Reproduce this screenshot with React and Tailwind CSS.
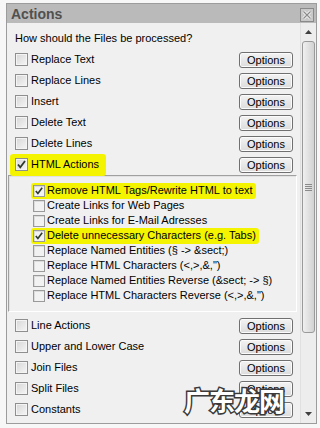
import React from "react";

const top = ["Replace Text", "Replace Lines", "Insert", "Delete Text", "Delete Lines"];
const subs = [
  { label: "Remove HTML Tags/Rewrite HTML to text", on: true },
  { label: "Create Links for Web Pages" },
  { label: "Create Links for E-Mail Adresses" },
  { label: "Delete unnecessary Characters (e.g. Tabs)", on: true },
  { label: "Replace Named Entities (§ -> &sect;)" },
  { label: 'Replace HTML Characters (<,>,&,")' },
  { label: "Replace Named Entities Reverse (&sect; -> §)" },
  { label: 'Replace HTML Characters Reverse (<,>,&,")' },
];
const bottom = ["Line Actions", "Upper and Lower Case", "Join Files", "Split Files", "Constants", ""];

function Tick({ size = 11 }) {
  return (
    <svg width={size} height={size} viewBox="0 0 11 11" className="absolute inset-0 m-auto">
      <path d="M2 5.5 L4.3 8.3 L9 2" fill="none" stroke="#2e3a2a" strokeWidth="1.8" />
    </svg>
  );
}

function Box({ on }) {
  return (
    <span className="relative w-[13px] h-[13px] shrink-0 border border-[#8f8f8f] bg-gradient-to-br from-[#d6d6d6] to-[#f6f6f6] shadow-[inset_0_0_0_1px_#f4f4f4]">
      {on && <Tick />}
    </span>
  );
}

function SubBox({ on }) {
  return (
    <span className="relative w-[12px] h-[12px] shrink-0 border border-[#9a9a9a] bg-[#f2f2f2] shadow-[inset_1px_1px_0_#dcdcdc]">
      {on && <Tick size={10} />}
    </span>
  );
}

function OptBtn() {
  return (
    <button className="w-[54px] h-[16px] rounded-[3px] border border-[#707070] bg-gradient-to-b from-[#f3f3f3] to-[#dcdcdc] text-[11px] leading-[14px] text-black shadow-[inset_0_0_0_1px_#fbfbfb]">
      Options
    </button>
  );
}

function Row({ label, on, hl }) {
  return (
    <div className="h-[21px] flex items-center justify-between">
      <span
        className={
          hl
            ? "flex items-center gap-[3px] h-[22px] -ml-[5px] pl-[5px] pr-[7px] bg-[#f4f400] rounded-[3px]"
            : "flex items-center gap-[3px]"
        }
      >
        {label !== "" && <Box on={on} />}
        <span className="text-[11px] text-black whitespace-nowrap">{label}</span>
      </span>
      <OptBtn />
    </div>
  );
}

export default function App() {
  return (
    <div
      className="relative w-[320px] h-[428px] overflow-hidden bg-[#f7f7f7]"
      style={{ fontFamily: '"Liberation Sans", Arial, sans-serif' }}
    >
      <div className="ml-[6px] mt-[3px] w-[311px] h-[421px] border border-[#9c9c9c] flex flex-col overflow-hidden">
        <div className="h-[19px] shrink-0 bg-[#bababa] flex items-center justify-between pl-[4px] pr-[2px]">
          <span className="text-[14px] font-bold text-[#505050] leading-none">Actions</span>
          <span className="w-[14px] h-[14px] border border-[#8a8a8a] bg-[#c8c8c8] flex items-center justify-center mt-[2px]">
            <svg width="10" height="10" viewBox="0 0 10 10">
              <path d="M1.5 1.5 L8.5 8.5 M8.5 1.5 L1.5 8.5" stroke="#f4f4f4" strokeWidth="3" />
              <path d="M1.5 1.5 L8.5 8.5 M8.5 1.5 L1.5 8.5" stroke="#8a8a8a" strokeWidth="1.2" />
            </svg>
          </span>
        </div>
        <div className="flex flex-1 min-h-0">
          <div className="flex-1 bg-[#f0f0f0] pl-[8px] pr-[7px] overflow-hidden">
            <div className="pt-[8px] h-[26px] text-[11px] text-black leading-[14px]">
              How should the Files be processed?
            </div>
            {top.map((t) => (
              <Row key={t} label={t} />
            ))}
            <Row label="HTML Actions" on hl />
            <div className="-ml-[7px] -mr-[4px] mr-[-4px] border-t border-l border-[#a0a0a0] border-b border-r border-b-white border-r-white shadow-[inset_1px_1px_0_#e2e2e2] pt-[7px] pb-[8px] pl-[24px]">
              {subs.map((s) => (
                <div key={s.label} className="h-[15px] flex items-center">
                  <span
                    className={
                      s.on
                        ? "flex items-center gap-[2px] h-[16px] -ml-[2px] pl-[2px] pr-[3px] bg-[#f4f400] rounded-[3px]"
                        : "flex items-center gap-[2px]"
                    }
                  >
                    <SubBox on={s.on} />
                    <span className="text-[11px] text-black whitespace-nowrap">{s.label}</span>
                  </span>
                </div>
              ))}
            </div>
            <div className="pt-[3px]">
              {bottom.map((t, i) => (
                <Row key={i} label={t} />
              ))}
            </div>
          </div>
          <div className="w-[16px] shrink-0 bg-[#ededed] border-l border-[#e0e0e0] flex flex-col items-center">
            <div className="h-[18px] shrink-0 flex items-center justify-center">
              <svg width="7" height="4" viewBox="0 0 7 4">
                <path d="M0 4 L3.5 0 L7 4 Z" fill="#404040" />
              </svg>
            </div>
            <div className="h-[292px] w-[13px] shrink-0 rounded-[3px] border border-[#9a9a9a] bg-gradient-to-r from-[#f0f0f0] to-[#d2d2d2] flex flex-col items-center justify-center gap-[1px]">
              <span className="w-[7px] h-[1px] bg-[#8a8a8a]" />
              <span className="w-[7px] h-[1px] bg-[#8a8a8a]" />
              <span className="w-[7px] h-[1px] bg-[#8a8a8a]" />
              <span className="w-[7px] h-[1px] bg-[#8a8a8a]" />
            </div>
            <div className="flex-1" />
            <div className="h-[18px] shrink-0 flex items-center justify-center">
              <svg width="7" height="4" viewBox="0 0 7 4">
                <path d="M0 0 L3.5 4 L7 0 Z" fill="#404040" />
              </svg>
            </div>
          </div>
        </div>
      </div>
      <div
        className="absolute left-[184px] top-[380px] text-[26px] font-bold text-white tracking-[-1px] [-webkit-text-stroke:3px_#3a3a3a] [paint-order:stroke_fill]"
        style={{ fontFamily: '"Noto Sans CJK SC", sans-serif' }}
      >
        广东龙网
      </div>
    </div>
  );
}
